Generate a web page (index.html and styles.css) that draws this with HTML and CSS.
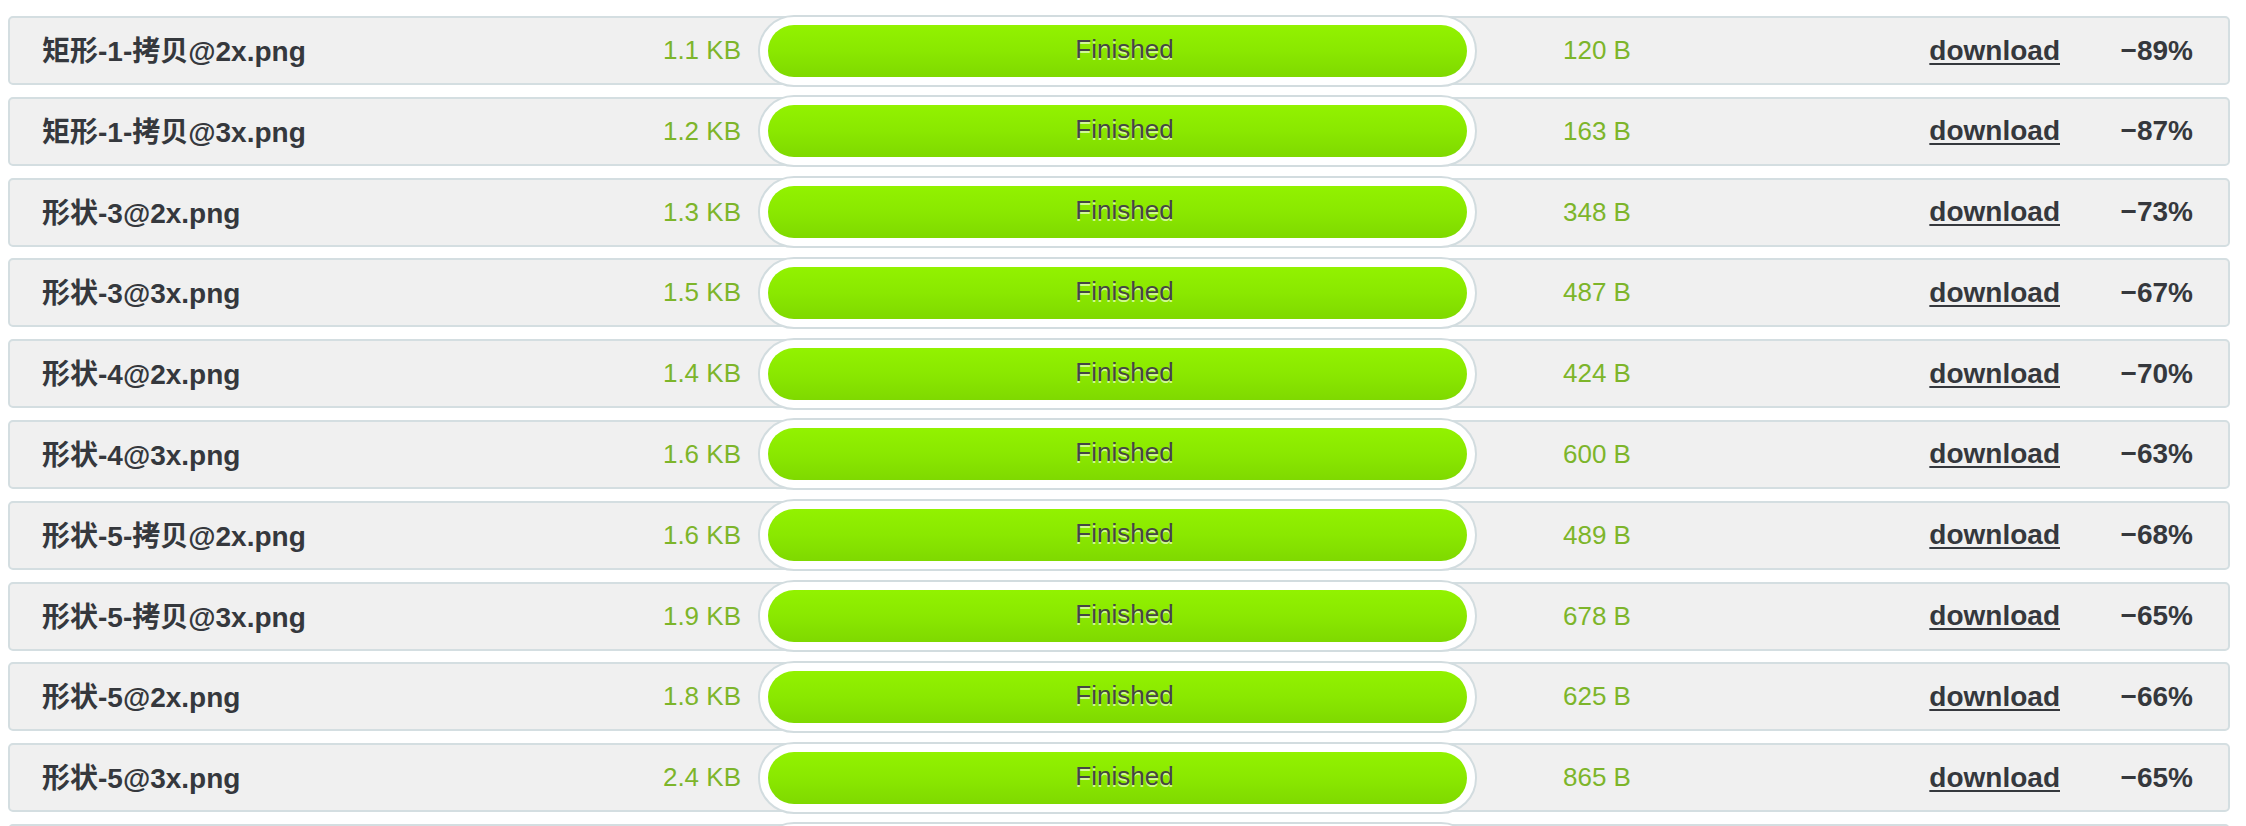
FILE: index.html
```html
<!DOCTYPE html>
<html lang="zh">
<head>
<meta charset="utf-8">
<title>Results</title>
<link rel="stylesheet" href="styles.css">
</head>
<body>
<ul class="files">
  <li class="file"><span class="name">矩形-1-拷贝@2x.png</span><span class="size">1.1 KB</span><span class="progress"><span class="bar">Finished</span></span><span class="new-size">120 B</span><span class="dl"><a href="#">download</a></span><span class="saved">−89%</span></li>
  <li class="file"><span class="name">矩形-1-拷贝@3x.png</span><span class="size">1.2 KB</span><span class="progress"><span class="bar">Finished</span></span><span class="new-size">163 B</span><span class="dl"><a href="#">download</a></span><span class="saved">−87%</span></li>
  <li class="file"><span class="name">形状-3@2x.png</span><span class="size">1.3 KB</span><span class="progress"><span class="bar">Finished</span></span><span class="new-size">348 B</span><span class="dl"><a href="#">download</a></span><span class="saved">−73%</span></li>
  <li class="file"><span class="name">形状-3@3x.png</span><span class="size">1.5 KB</span><span class="progress"><span class="bar">Finished</span></span><span class="new-size">487 B</span><span class="dl"><a href="#">download</a></span><span class="saved">−67%</span></li>
  <li class="file"><span class="name">形状-4@2x.png</span><span class="size">1.4 KB</span><span class="progress"><span class="bar">Finished</span></span><span class="new-size">424 B</span><span class="dl"><a href="#">download</a></span><span class="saved">−70%</span></li>
  <li class="file"><span class="name">形状-4@3x.png</span><span class="size">1.6 KB</span><span class="progress"><span class="bar">Finished</span></span><span class="new-size">600 B</span><span class="dl"><a href="#">download</a></span><span class="saved">−63%</span></li>
  <li class="file"><span class="name">形状-5-拷贝@2x.png</span><span class="size">1.6 KB</span><span class="progress"><span class="bar">Finished</span></span><span class="new-size">489 B</span><span class="dl"><a href="#">download</a></span><span class="saved">−68%</span></li>
  <li class="file"><span class="name">形状-5-拷贝@3x.png</span><span class="size">1.9 KB</span><span class="progress"><span class="bar">Finished</span></span><span class="new-size">678 B</span><span class="dl"><a href="#">download</a></span><span class="saved">−65%</span></li>
  <li class="file"><span class="name">形状-5@2x.png</span><span class="size">1.8 KB</span><span class="progress"><span class="bar">Finished</span></span><span class="new-size">625 B</span><span class="dl"><a href="#">download</a></span><span class="saved">−66%</span></li>
  <li class="file"><span class="name">形状-5@3x.png</span><span class="size">2.4 KB</span><span class="progress"><span class="bar">Finished</span></span><span class="new-size">865 B</span><span class="dl"><a href="#">download</a></span><span class="saved">−65%</span></li>
  <li class="file"><span class="name"></span><span class="size"></span><span class="progress"><span class="bar"></span></span><span class="new-size"></span><span class="dl"></span><span class="saved"></span></li>
</ul>
</body>
</html>
```

FILE: styles.css
```css
html, body {
  margin: 0;
  padding: 0;
  overflow: hidden;
  background: #ffffff;
}

body {
  font-family: "Liberation Sans", Arial, "Noto Sans CJK SC", sans-serif;
  color: #35383d;
}

.files {
  list-style: none;
  margin: 0;
  padding: 16px 16px 0 8px;
}

.file {
  box-sizing: border-box;
  height: 69px;
  margin-bottom: 11.8px;
  padding: 0 35px 0 32px;
  background: #f0f0f0;
  border: 2px solid #d4dee1;
  border-radius: 5px;
  display: grid;
  grid-template-columns: 558px 141px 736px 452px 1fr 133px;
  grid-template-rows: 65px;
  align-items: center;
}

.name {
  font-family: "Liberation Sans", Arial, "Noto Sans CJK SC", sans-serif;
  font-weight: bold;
  font-size: 28px;
  color: #35383d;
  white-space: nowrap;
  padding-bottom: 3px;
}

.size,
.new-size {
  font-size: 26px;
  color: #7db52a;
  white-space: nowrap;
}

.size {
  text-align: right;
}

.progress {
  box-sizing: border-box;
  justify-self: end;
  width: 719px;
  height: 72px;
  margin: -4px 0;
  padding: 8px;
  background: #ffffff;
  border: 2px solid #d2dcdf;
  border-radius: 36px;
  display: flex;
}

.bar {
  flex: 1;
  border-radius: 27px;
  background: linear-gradient(to bottom, #92f200 0%, #8ae800 50%, #7fd900 100%);
  display: flex;
  align-items: center;
  justify-content: center;
  padding: 0 0 3px 14px;
  font-size: 26px;
  color: #454545;
  text-shadow: 0 2px 0 rgba(230, 255, 190, 0.8);
}

.new-size {
  padding-left: 86px;
}

.dl {
  text-align: right;
}

.dl a {
  font-weight: bold;
  font-size: 28px;
  color: #35383d;
  text-decoration: underline;
  text-decoration-thickness: 2px;
  text-underline-offset: 3px;
}

.saved {
  text-align: right;
  font-weight: bold;
  font-size: 28px;
  color: #35383d;
  white-space: nowrap;
}
```
